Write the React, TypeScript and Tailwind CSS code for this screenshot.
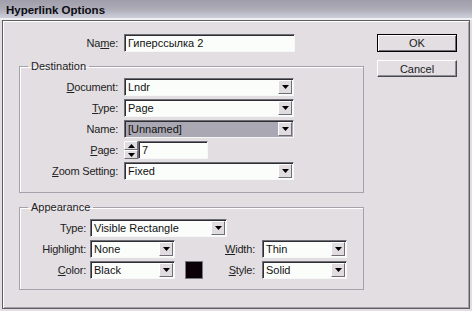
import type { ReactNode } from 'react';

const FONT = { fontFamily: '"Liberation Sans", Arial, sans-serif' };

function Arrow({ up = false }: { up?: boolean }) {
  return (
    <svg width="7" height="4" viewBox="0 0 7 4" className={up ? 'rotate-180' : ''}>
      <path d="M0 0h7L3.5 4z" fill="#000" />
    </svg>
  );
}

function Field({
  children,
  width,
  grey = false,
  dropdown = true,
}: {
  children: ReactNode;
  width: string;
  grey?: boolean;
  dropdown?: boolean;
}) {
  return (
    <div
      className={`${width} h-[18px] flex border border-t-[#6f6e76] border-l-[#6f6e76] border-r-[#f7f7f7] border-b-[#f7f7f7] shadow-[inset_1px_1px_0_#2e2d33] ${
        grey ? 'bg-[#aaa8b3]' : 'bg-[#fbfdfb]'
      }`}
    >
      <span className="flex-1 pl-[3px] pt-[1px] leading-[15px] text-[#111] truncate">{children}</span>
      {dropdown && (
        <span className="w-[14px] h-[14px] mt-[1px] mr-[1px] flex items-center justify-center bg-[#e0dce0] border border-t-white border-l-white border-r-[#6f6e76] border-b-[#6f6e76]">
          <Arrow />
        </span>
      )}
    </div>
  );
}

function Label({ children, width }: { children: ReactNode; width: string }) {
  return <span className={`${width} text-right leading-[18px] text-[#222] tracking-[-0.2px]`}>{children}</span>;
}

function Row({ children }: { children: ReactNode }) {
  return <div className="flex items-center h-[18px]">{children}</div>;
}

export default function App() {
  return (
    <div className="w-[472px] h-[311px] bg-[#e2dee2] text-[11px] overflow-hidden" style={FONT}>
      {/* Title bar */}
      <div className="h-[18px] bg-gradient-to-b from-[#9f9eaa] via-[#acabb6] to-[#cdd0db] pl-[6px] flex items-end">
        <span className="text-[11.5px] font-bold leading-[15px] text-[#0d0d14]">Hyperlink Options</span>
      </div>
      <div className="h-[2px] bg-[#f0eff2]" />

      {/* Dialog body */}
      <div className="mx-[2px] h-[289px] border border-[#5e5d64] shadow-[inset_1px_1px_0_#ffffff,inset_-1px_-1px_0_#a4a3aa] flex">
        {/* Left column */}
        <div className="pl-[16px] pt-[13px] w-[362px]">
          <Row>
            <Label width="w-[99px]">
              Na<u>m</u>e:
            </Label>
            <div className="ml-[6px]">
              <Field width="w-[171px]" dropdown={false}>
                Гиперссылка 2
              </Field>
            </div>
          </Row>

          <fieldset className="mt-[8px] w-[345px] border border-[#a3a2aa] pt-[5px] pb-[12px] shadow-[inset_1px_1px_0_#ffffff]">
            <legend className="ml-[8px] px-[3px] leading-[13px] text-[#222]">Destination</legend>
            <div className="flex flex-col gap-[3px]">
              <Row>
                <Label width="w-[98px]">
                  <u>D</u>ocument:
                </Label>
                <div className="ml-[6px]">
                  <Field width="w-[170px]">Lndr</Field>
                </div>
              </Row>
              <Row>
                <Label width="w-[98px]">
                  <u>T</u>ype:
                </Label>
                <div className="ml-[6px]">
                  <Field width="w-[170px]">Page</Field>
                </div>
              </Row>
              <Row>
                <Label width="w-[98px]">Name:</Label>
                <div className="ml-[6px]">
                  <Field width="w-[170px]" grey>
                    [Unnamed]
                  </Field>
                </div>
              </Row>
              <Row>
                <Label width="w-[98px]">
                  <u>P</u>age:
                </Label>
                <div className="ml-[6px] flex">
                  <div className="w-[14px] h-[18px] flex flex-col">
                    <span className="h-[9px] flex items-center justify-center bg-[#e0dce0] border border-t-white border-l-white border-r-[#6f6e76] border-b-[#6f6e76]">
                      <Arrow up />
                    </span>
                    <span className="h-[9px] flex items-center justify-center bg-[#e0dce0] border border-t-white border-l-white border-r-[#6f6e76] border-b-[#6f6e76]">
                      <Arrow />
                    </span>
                  </div>
                  <Field width="w-[70px]" dropdown={false}>
                    7
                  </Field>
                </div>
              </Row>
              <Row>
                <Label width="w-[98px]">
                  <u>Z</u>oom Setting:
                </Label>
                <div className="ml-[6px]">
                  <Field width="w-[170px]">Fixed</Field>
                </div>
              </Row>
            </div>
          </fieldset>

          <fieldset className="mt-[8px] w-[345px] border border-[#a3a2aa] pt-[5px] pb-[10px] shadow-[inset_1px_1px_0_#ffffff]">
            <legend className="ml-[8px] px-[3px] leading-[13px] text-[#222]">Appearance</legend>
            <div className="flex flex-col gap-[3px]">
              <Row>
                <Label width="w-[66px]">Type:</Label>
                <div className="ml-[4px]">
                  <Field width="w-[137px]">Visible Rectangle</Field>
                </div>
              </Row>
              <Row>
                <Label width="w-[66px]">Highlight:</Label>
                <div className="ml-[4px]">
                  <Field width="w-[85px]">None</Field>
                </div>
                <Label width="w-[80px]">
                  <u>W</u>idth:
                </Label>
                <div className="ml-[7px]">
                  <Field width="w-[85px]">Thin</Field>
                </div>
              </Row>
              <Row>
                <Label width="w-[66px]">
                  <u>C</u>olor:
                </Label>
                <div className="ml-[4px]">
                  <Field width="w-[85px]">Black</Field>
                </div>
                <div className="ml-[10px] w-[18px] h-[18px] bg-[#0a0006] border border-[#7a7980]" />
                <Label width="w-[52px]">
                  <u>S</u>tyle:
                </Label>
                <div className="ml-[7px]">
                  <Field width="w-[85px]">Solid</Field>
                </div>
              </Row>
            </div>
          </fieldset>
        </div>

        {/* Buttons */}
        <div className="pl-[12px] pt-[13px] flex flex-col gap-[8px]">
          <button
            type="button"
            className="w-[80px] h-[18px] border border-black bg-[#e2dee2] shadow-[inset_1px_1px_0_#ffffff,inset_-1px_-1px_0_#6f6e76] leading-[15px] text-[#1a1a1a]"
          >
            OK
          </button>
          <button
            type="button"
            className="w-[80px] h-[17px] border border-t-white border-l-white border-r-[#4a4950] border-b-[#4a4950] bg-[#e2dee2] shadow-[inset_-1px_-1px_0_#8e8d94] leading-[14px] text-[#1a1a1a]"
          >
            Cancel
          </button>
        </div>
      </div>
    </div>
  );
}
